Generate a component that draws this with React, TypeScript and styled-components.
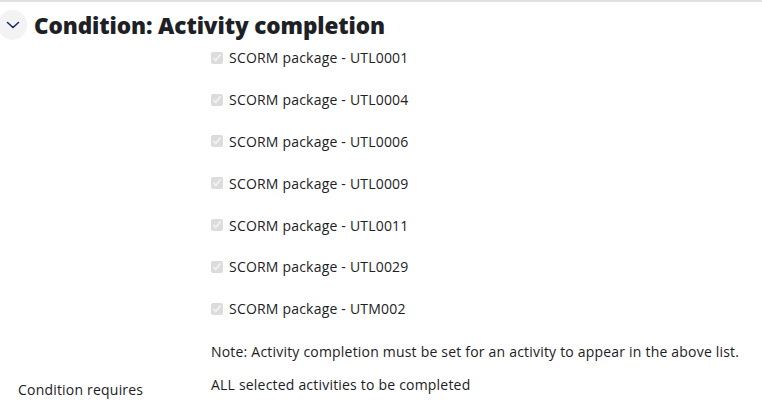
import React from "react";
import styled, { createGlobalStyle } from "styled-components";

const ACTIVITIES = [
  "UTL0001",
  "UTL0004",
  "UTL0006",
  "UTL0009",
  "UTL0011",
  "UTL0029",
  "UTM002",
];

const GlobalStyle = createGlobalStyle`
  html, body {
    margin: 0;
    padding: 0;
    background: #fff;
  }
  body {
    font-family: "Open Sans", "DejaVu Sans", sans-serif;
    color: #1d2125;
  }
`;

const Section = styled.div`
  border-top: 2px solid #e2e2e2;
  overflow: hidden;
`;

const Header = styled.div`
  display: flex;
  align-items: center;
  gap: 7px;
  height: 30px;
  margin: 8px 0 -3px -2px;
`;

const ToggleButton = styled.span`
  display: flex;
  align-items: center;
  justify-content: center;
  flex: none;
  width: 29px;
  height: 30px;
  border-radius: 50%;
  background: #f3f3f6;
  color: #1c2a5a;
`;

const Title = styled.h3`
  margin: 0;
  font-family: "Open Sans", sans-serif;
  font-weight: 800;
  font-size: 22.5px;
  letter-spacing: -0.1px;
  color: #1d2125;
`;

const FormRow = styled.div`
  display: grid;
  grid-template-columns: 211px 1fr;
  align-items: start;
`;

const Label = styled.div`
  padding-left: 18px;
  padding-top: 8px;
  font-size: 14px;
  letter-spacing: 0.2px;
`;

const List = styled.div`
  display: flex;
  flex-direction: column;
`;

const Item = styled.label`
  display: flex;
  align-items: center;
  height: 41.8px;
  font-size: 14px;
  letter-spacing: 0.2px;
  gap: 6px;
`;

const Check = styled.input`
  margin: 0;
  width: 12px;
  height: 12px;
  opacity: 0.75;
`;

const Note = styled.div`
  font-size: 14px;
  letter-spacing: 0.2px;
  padding-top: 12px;
  height: 30px;
`;

const Value = styled.div`
  font-size: 14px;
  letter-spacing: 0.2px;
  padding-top: 3px;
`;

export default function App() {
  return (
    <>
      <GlobalStyle />
      <Section>
        <Header>
          <ToggleButton>
            <svg width="14" height="8" viewBox="0 0 14 8" fill="none">
              <path
                d="M1.5 1.5 L7 6.5 L12.5 1.5"
                stroke="currentColor"
                strokeWidth="1.6"
                strokeLinecap="round"
                strokeLinejoin="round"
              />
            </svg>
          </ToggleButton>
          <Title>Condition: Activity completion</Title>
        </Header>
        <FormRow>
          <div />
          <List>
            {ACTIVITIES.map((code) => (
              <Item key={code}>
                <Check type="checkbox" checked disabled readOnly />
                SCORM package - {code}
              </Item>
            ))}
            <Note>
              Note: Activity completion must be set for an activity to appear in
              the above list.
            </Note>
          </List>
        </FormRow>
        <FormRow>
          <Label>Condition requires</Label>
          <Value>ALL selected activities to be completed</Value>
        </FormRow>
      </Section>
    </>
  );
}
